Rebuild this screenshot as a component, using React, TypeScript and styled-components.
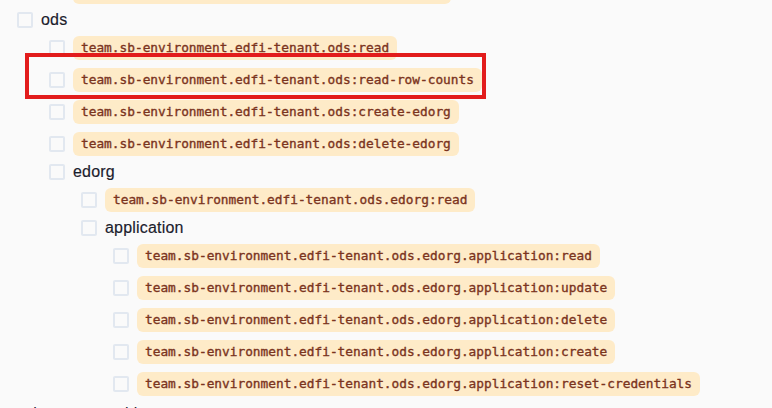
import styled, { createGlobalStyle } from 'styled-components'

const GlobalStyle = createGlobalStyle`
  html, body {
    margin: 0;
    padding: 0;
    background: #fafafa;
    overflow: hidden;
  }
`

type Node = {
  level: number
  label: string
  code?: boolean
}

const nodes: Node[] = [
  { level: 1, label: 'team.sb-environment.edfi-tenant:reset-ods-cache', code: true },
  { level: 0, label: 'ods' },
  { level: 1, label: 'team.sb-environment.edfi-tenant.ods:read', code: true },
  { level: 1, label: 'team.sb-environment.edfi-tenant.ods:read-row-counts', code: true },
  { level: 1, label: 'team.sb-environment.edfi-tenant.ods:create-edorg', code: true },
  { level: 1, label: 'team.sb-environment.edfi-tenant.ods:delete-edorg', code: true },
  { level: 1, label: 'edorg' },
  { level: 2, label: 'team.sb-environment.edfi-tenant.ods.edorg:read', code: true },
  { level: 2, label: 'application' },
  { level: 3, label: 'team.sb-environment.edfi-tenant.ods.edorg.application:read', code: true },
  { level: 3, label: 'team.sb-environment.edfi-tenant.ods.edorg.application:update', code: true },
  { level: 3, label: 'team.sb-environment.edfi-tenant.ods.edorg.application:delete', code: true },
  { level: 3, label: 'team.sb-environment.edfi-tenant.ods.edorg.application:create', code: true },
  { level: 3, label: 'team.sb-environment.edfi-tenant.ods.edorg.application:reset-credentials', code: true },
]

export default function App() {
  return (
    <Page>
      <GlobalStyle />
      <Tree>
        {nodes.map((n, i) => (
          <Row key={i} level={n.level}>
            <Box />
            {n.code ? <Code>{n.label}</Code> : <Label>{n.label}</Label>}
          </Row>
        ))}
        <Section>other-tenant-table</Section>
      </Tree>
      <Highlight />
    </Page>
  )
}

const Page = styled.div`
  position: relative;
  width: 772px;
  height: 408px;
  overflow: hidden;
`

const Tree = styled.div`
  display: flex;
  flex-direction: column;
  gap: 8px;
  margin-top: -20px;
`

const Row = styled.div<{ level: number }>`
  display: flex;
  align-items: center;
  gap: 8px;
  padding-left: ${({ level }) => 17 + level * 32}px;
`

const Box = styled.span`
  flex: none;
  width: 16px;
  height: 16px;
  box-sizing: border-box;
  border: 2px solid #e2e8f0;
  border-radius: 2px;
`

const Label = styled.span`
  font-family: 'Liberation Sans', Arial, sans-serif;
  font-size: 16px;
  line-height: 16px;
  letter-spacing: 0.2px;
  color: #1a202c;
  -webkit-text-stroke: 0.15px #1a202c;
`

const Code = styled.code`
  font-family: 'DejaVu Sans Mono', 'Liberation Mono', monospace;
  font-size: 12.8px;
  line-height: 24px;
  color: #7b341e;
  -webkit-text-stroke: 0.35px #7b341e;
  background: #feebc8;
  padding: 0 8px;
  border-radius: 6px;
  white-space: nowrap;
`

const Section = styled.div`
  padding-left: 20px;
  font-family: 'Liberation Sans', Arial, sans-serif;
  font-size: 16px;
  line-height: 20px;
  color: #1a202c;
`

const Highlight = styled.div`
  position: absolute;
  left: 25px;
  top: 53px;
  width: 461px;
  height: 46px;
  box-sizing: border-box;
  border: 4px solid #e21c1c;
`
